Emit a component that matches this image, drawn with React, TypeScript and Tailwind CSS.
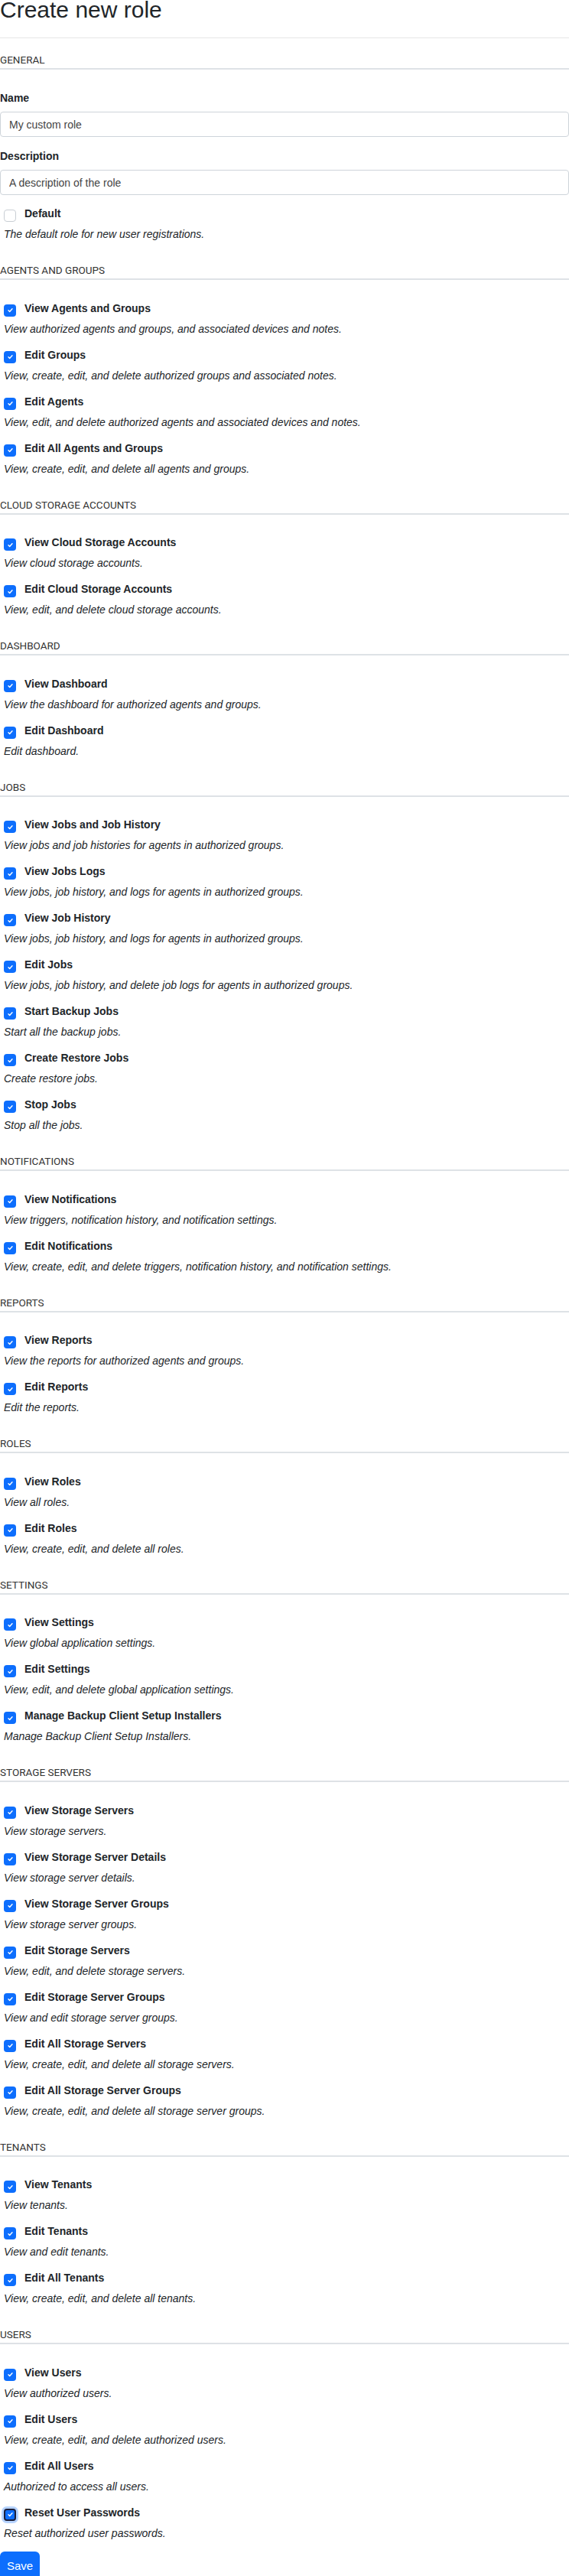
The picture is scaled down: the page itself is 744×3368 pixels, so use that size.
import React from 'react'

/* ── Permission data ────────────────────────────────────────────── */
type Perm = { label: string; desc: string; focus?: boolean }

const SECTIONS: { title: string; items: Perm[] }[] = [
  {
    title: 'Agents and Groups',
    items: [
      { label: 'View Agents and Groups', desc: 'View authorized agents and groups, and associated devices and notes.' },
      { label: 'Edit Groups', desc: 'View, create, edit, and delete authorized groups and associated notes.' },
      { label: 'Edit Agents', desc: 'View, edit, and delete authorized agents and associated devices and notes.' },
      { label: 'Edit All Agents and Groups', desc: 'View, create, edit, and delete all agents and groups.' },
    ],
  },
  {
    title: 'Cloud Storage Accounts',
    items: [
      { label: 'View Cloud Storage Accounts', desc: 'View cloud storage accounts.' },
      { label: 'Edit Cloud Storage Accounts', desc: 'View, edit, and delete cloud storage accounts.' },
    ],
  },
  {
    title: 'Dashboard',
    items: [
      { label: 'View Dashboard', desc: 'View the dashboard for authorized agents and groups.' },
      { label: 'Edit Dashboard', desc: 'Edit dashboard.' },
    ],
  },
  {
    title: 'Jobs',
    items: [
      { label: 'View Jobs and Job History', desc: 'View jobs and job histories for agents in authorized groups.' },
      { label: 'View Jobs Logs', desc: 'View jobs, job history, and logs for agents in authorized groups.' },
      { label: 'View Job History', desc: 'View jobs, job history, and logs for agents in authorized groups.' },
      { label: 'Edit Jobs', desc: 'View jobs, job history, and delete job logs for agents in authorized groups.' },
      { label: 'Start Backup Jobs', desc: 'Start all the backup jobs.' },
      { label: 'Create Restore Jobs', desc: 'Create restore jobs.' },
      { label: 'Stop Jobs', desc: 'Stop all the jobs.' },
    ],
  },
  {
    title: 'Notifications',
    items: [
      { label: 'View Notifications', desc: 'View triggers, notification history, and notification settings.' },
      { label: 'Edit Notifications', desc: 'View, create, edit, and delete triggers, notification history, and notification settings.' },
    ],
  },
  {
    title: 'Reports',
    items: [
      { label: 'View Reports', desc: 'View the reports for authorized agents and groups.' },
      { label: 'Edit Reports', desc: 'Edit the reports.' },
    ],
  },
  {
    title: 'Roles',
    items: [
      { label: 'View Roles', desc: 'View all roles.' },
      { label: 'Edit Roles', desc: 'View, create, edit, and delete all roles.' },
    ],
  },
  {
    title: 'Settings',
    items: [
      { label: 'View Settings', desc: 'View global application settings.' },
      { label: 'Edit Settings', desc: 'View, edit, and delete global application settings.' },
      { label: 'Manage Backup Client Setup Installers', desc: 'Manage Backup Client Setup Installers.' },
    ],
  },
  {
    title: 'Storage Servers',
    items: [
      { label: 'View Storage Servers', desc: 'View storage servers.' },
      { label: 'View Storage Server Details', desc: 'View storage server details.' },
      { label: 'View Storage Server Groups', desc: 'View storage server groups.' },
      { label: 'Edit Storage Servers', desc: 'View, edit, and delete storage servers.' },
      { label: 'Edit Storage Server Groups', desc: 'View and edit storage server groups.' },
      { label: 'Edit All Storage Servers', desc: 'View, create, edit, and delete all storage servers.' },
      { label: 'Edit All Storage Server Groups', desc: 'View, create, edit, and delete all storage server groups.' },
    ],
  },
  {
    title: 'Tenants',
    items: [
      { label: 'View Tenants', desc: 'View tenants.' },
      { label: 'Edit Tenants', desc: 'View and edit tenants.' },
      { label: 'Edit All Tenants', desc: 'View, create, edit, and delete all tenants.' },
    ],
  },
  {
    title: 'Users',
    items: [
      { label: 'View Users', desc: 'View authorized users.' },
      { label: 'Edit Users', desc: 'View, create, edit, and delete authorized users.' },
      { label: 'Edit All Users', desc: 'Authorized to access all users.' },
      { label: 'Reset User Passwords', desc: 'Reset authorized user passwords.', focus: true },
    ],
  },
]

/* ── Checkbox ───────────────────────────────────────────────────── */
function Check({ checked, focus }: { checked: boolean; focus?: boolean }) {
  if (!checked) {
    return <span className="mt-[5px] block h-4 w-4 shrink-0 rounded-[4px] border border-[#c9ced4] bg-white" />
  }
  return (
    <span
      className={
        focus
          ? 'mt-[5px] flex h-4 w-4 shrink-0 items-center justify-center rounded-[4px] border-2 border-[#1b1f3a] bg-[#0d6efd] shadow-[0_0_0_3px_rgba(13,110,253,0.3)]'
          : 'mt-[5px] flex h-4 w-4 shrink-0 items-center justify-center rounded-[4px] bg-[#0d6efd]'
      }
    >
      <svg viewBox="0 0 20 20" className="h-[11px] w-[11px]" fill="none">
        <path d="M5.5 10.5l3 3 6-6.5" stroke="#fff" strokeWidth="2.6" strokeLinecap="round" strokeLinejoin="round" />
      </svg>
    </span>
  )
}

function Item({ label, desc, checked = true, focus }: Perm & { checked?: boolean }) {
  return (
    <div className="pb-[13px] pl-[5px]">
      <div className="flex items-start gap-[11px]">
        <Check checked={checked} focus={focus} />
        <span className="text-[14px] font-bold leading-[21px] text-[#212529]">{label}</span>
      </div>
      <p className="mt-[6px] text-[14px] italic leading-[21px] text-[#212529]">{desc}</p>
    </div>
  )
}

function SectionHeader({ title, top = 'pt-[13px]' }: { title: string; top?: string }) {
  return (
    <div className={top}>
      <h6 className="border-b-2 border-[#dee2e6] font-['Roboto',sans-serif] text-[13.5px] font-normal uppercase leading-[21px] text-[#333]">
        {title}
      </h6>
    </div>
  )
}

export default function App() {
  return (
    <div className="min-h-[3368px] bg-white font-['Liberation_Sans',Arial,sans-serif] text-[#212529]">
      <h1 className="mt-[-5px] text-[30px] font-normal leading-[36px] text-[#212529]">Create new role</h1>
      <hr className="mt-[18px] border-t border-[#e6e6e6]" />

      <SectionHeader title="General" top="pt-[18px]" />

      <div className="pt-[27px]">
        <label className="block text-[14px] font-bold leading-[21px]">Name</label>
        <input
          className="mt-[7px] block h-[33px] w-full rounded-[4px] border border-[#ced4da] px-[11px] text-[14px] text-[#333] placeholder:text-[#444]"
          placeholder="My custom role"
        />
        <label className="mt-[15px] block text-[14px] font-bold leading-[21px]">Description</label>
        <input
          className="mt-[7px] block h-[33px] w-full rounded-[4px] border border-[#ced4da] px-[11px] text-[14px] text-[#333] placeholder:text-[#444]"
          placeholder="A description of the role"
        />
        <div className="pt-[14px]">
          <Item label="Default" desc="The default role for new user registrations." checked={false} />
        </div>
      </div>

      {SECTIONS.map((s) => (
        <section key={s.title}>
          <SectionHeader title={s.title} />
          <div className="pt-[26.5px]">
            {s.items.map((p) => (
              <Item key={p.label} {...p} />
            ))}
          </div>
        </section>
      ))}

      <button className="block h-[38px] w-[52px] rounded-[6px] bg-[#0d6efd] text-center text-[15px] leading-[38px] text-white">
        Save
      </button>
    </div>
  )
}
